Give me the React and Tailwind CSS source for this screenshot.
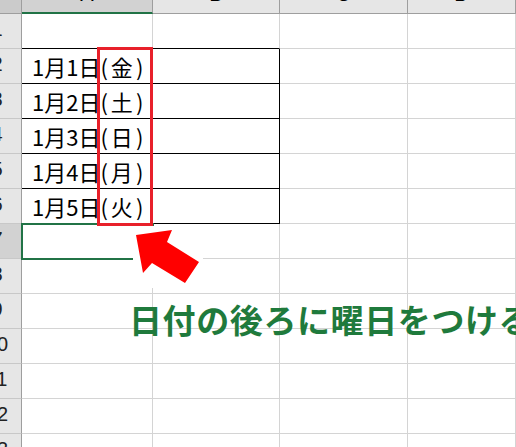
import React from 'react';

const days = [
  { d: '1月1日', w: '金' },
  { d: '1月2日', w: '土' },
  { d: '1月3日', w: '日' },
  { d: '1月4日', w: '月' },
  { d: '1月5日', w: '火' },
];

const grid = 'grid grid-cols-[22px_131px_127px_128px_1fr]';
const cell = 'h-[35px] border-r border-b border-[#d4d4d4]';

const RowHead = ({ n, selected }) => (
  <div
    className={`h-[35px] border-r border-b border-r-[#9e9e9e] border-b-[#c8c8c8] overflow-hidden flex items-center pb-1 ${
      selected ? 'bg-[#d2d2d2]' : 'bg-[#e6e6e6]'
    }`}
  >
    <span className="w-[44px] -ml-[25px] shrink-0 text-center text-[20px] leading-none text-[#222]">{n}</span>
  </div>
);

const ColHead = ({ label, selected }) => (
  <div
    className={`h-[14px] overflow-hidden flex justify-center border-r border-r-[#9e9e9e] ${
      selected ? 'bg-[#d2d2d2] border-b-2 border-b-[#217346]' : 'bg-[#e6e6e6] border-b border-b-[#9e9e9e]'
    }`}
  >
    <span className="block -mt-[16px] text-[20px] leading-none text-black">{label}</span>
  </div>
);

export default function App() {
  return (
    <div
      className="relative w-[516px] h-[447px] overflow-hidden bg-white"
      style={{ fontFamily: '"Liberation Sans", "Noto Sans CJK JP", sans-serif' }}
    >
      {/* column headers */}
      <div className={grid}>
        <div className="h-[14px] bg-[#cbcbcb] border-r border-b border-[#9e9e9e]" />
        <ColHead label="A" selected />
        <ColHead label="B" />
        <ColHead label="C" />
        <ColHead label="D" />
      </div>

      {/* row 1 */}
      <div className={grid}>
        <RowHead n={1} />
        <div className={`${cell} border-b-black`} />
        <div className={`${cell} border-b-black`} />
        <div className={cell} />
        <div className={cell} />
      </div>

      {/* data rows */}
      {days.map((x, i) => (
        <div key={x.d} className={grid}>
          <RowHead n={i + 2} />
          <div className="h-[35px] border-r border-b border-black flex items-center pl-[10px] whitespace-nowrap text-[22px] text-black" style={{ fontFamily: '"Noto Sans CJK JP", sans-serif' }}>
            <span>{x.d}</span>
            <span>(</span>
            <span className="mx-[3px]">{x.w}</span>
            <span>)</span>
          </div>
          <div className="h-[35px] border-r border-b border-black" />
          <div className={cell} />
          <div className={cell} />
        </div>
      ))}

      {/* rows 7-13 */}
      {[7, 8, 9, 10, 11, 12, 13].map((n) => (
        <div key={n} className={grid}>
          <RowHead n={n} selected={n === 7} />
          <div className={`${cell} relative`}>
            {n === 7 && <div className="absolute -left-px -top-px w-[133px] h-[37px] border-2 border-[#217346]" />}
          </div>
          <div className={cell} />
          <div className={cell} />
          <div className={cell} />
        </div>
      ))}

      {/* red highlight box */}
      <div className="absolute left-[97px] top-[47px] w-[56px] h-[179px] border-[3px] border-[#e8202a]" />

      {/* arrow */}
      <svg className="absolute left-[133px] top-[226px]" width="70" height="62" viewBox="0 0 70 62">
        <rect width="70" height="62" fill="#fff" />
        <polygon points="3,9 39,4 34,16 66,36 52,57 19,37 10,47" fill="#ff0000" />
      </svg>

      {/* caption */}
      <div
        className="absolute left-[129px] top-[303px] whitespace-nowrap text-[33px] leading-none font-bold tracking-[0.6px] text-[#1f7a3c]"
        style={{ fontFamily: '"Noto Sans CJK JP", sans-serif' }}
      >
        日付の後ろに曜日をつける
      </div>
    </div>
  );
}
